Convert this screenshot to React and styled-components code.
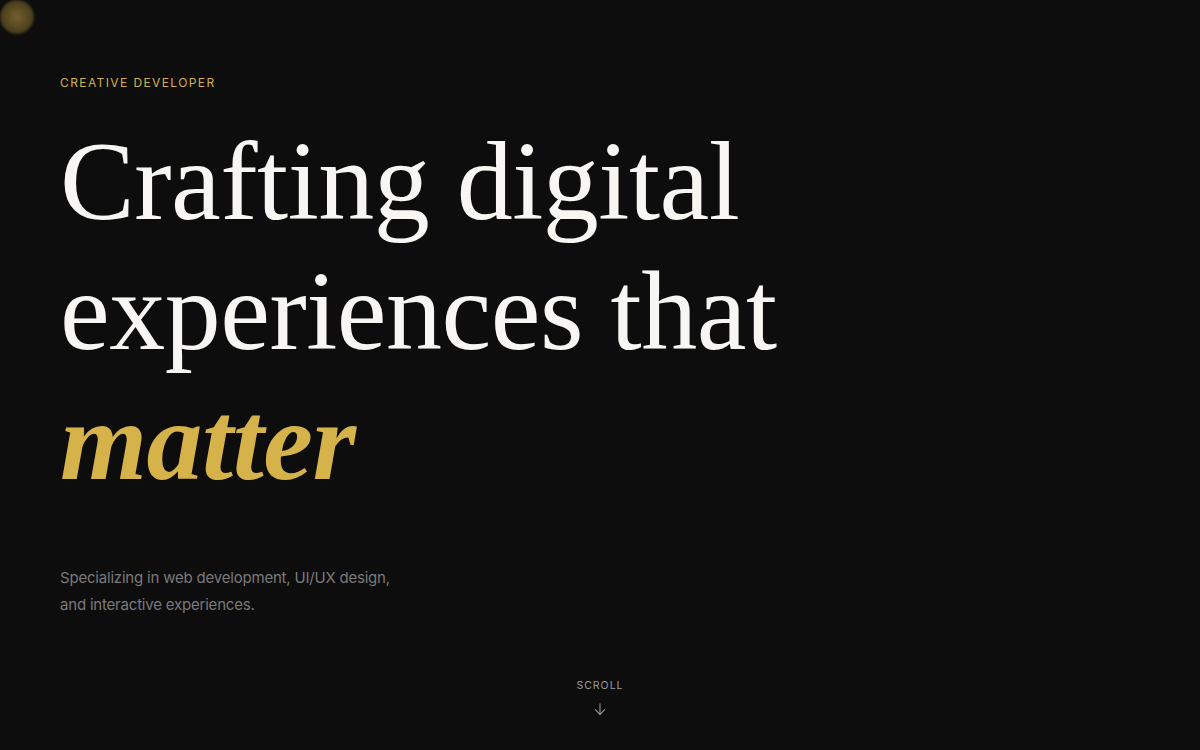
import React from "react";
import styled, { createGlobalStyle } from "styled-components";

const Global = createGlobalStyle`
  html, body { margin: 0; padding: 0; background: #0d0d0d; }
  * { box-sizing: border-box; }
`;

const Hero = styled.main`
  position: relative;
  height: 750px;
  overflow: hidden;
  background: #0d0d0d;
  display: flex;
  flex-direction: column;
  padding: 76px 60px 33px;
`;

const Glow = styled.div`
  position: absolute;
  left: 0;
  top: 0;
  width: 34px;
  height: 34px;
  border-radius: 50%;
  background: radial-gradient(circle, rgba(150, 125, 55, 0.75) 0%, rgba(120, 100, 40, 0.6) 60%, rgba(90, 75, 30, 0.15) 100%);
  filter: blur(1px);
`;

const Eyebrow = styled.div`
  font-family: "Inter", "Liberation Sans", sans-serif;
  font-size: 12px;
  line-height: 14px;
  font-weight: 400;
  letter-spacing: 1.4px;
  color: #d2b04c;
  text-transform: uppercase;
`;

const Headline = styled.h1`
  margin: 26px 0 0;
  font-family: "Liberation Serif", "Times New Roman", serif;
  font-weight: 400;
  font-size: 112px;
  line-height: 130px;
  color: #f7f6f2;
  letter-spacing: -0.5px;
`;

const Line = styled.span`
  display: block;
`;

const Accent = styled.em`
  display: block;
  font-style: italic;
  font-weight: 700;
  color: #d6b24a;
`;

const Lead = styled.p`
  margin: 58px 0 0;
  max-width: 345px;
  font-family: "Inter", "Liberation Sans", sans-serif;
  font-size: 15px;
  line-height: 27px;
  color: #7a7a7a;
  letter-spacing: -0.2px;
`;

const Scroll = styled.div`
  margin-top: auto;
  align-self: center;
  display: flex;
  flex-direction: column;
  align-items: center;
  gap: 9px;
  font-family: "Inter", "Liberation Sans", sans-serif;
  font-size: 10.5px;
  line-height: 12px;
  letter-spacing: 1px;
  color: #9a9a9a;
`;

export default function App() {
  return (
    <>
      <Global />
      <Hero>
        <Glow />
        <Eyebrow>Creative Developer</Eyebrow>
        <Headline>
          <Line>Crafting digital</Line>
          <Line>experiences that</Line>
          <Accent>matter</Accent>
        </Headline>
        <Lead>
          Specializing in web development, UI/UX design, and interactive experiences.
        </Lead>
        <Scroll>
          <span>SCROLL</span>
          <svg width="16" height="16" viewBox="0 0 24 24" fill="none" stroke="#9a9a9a" strokeWidth="1.6" strokeLinecap="round" strokeLinejoin="round">
            <path d="M12 4v16" />
            <path d="M5 13l7 7 7-7" />
          </svg>
        </Scroll>
      </Hero>
    </>
  );
}
